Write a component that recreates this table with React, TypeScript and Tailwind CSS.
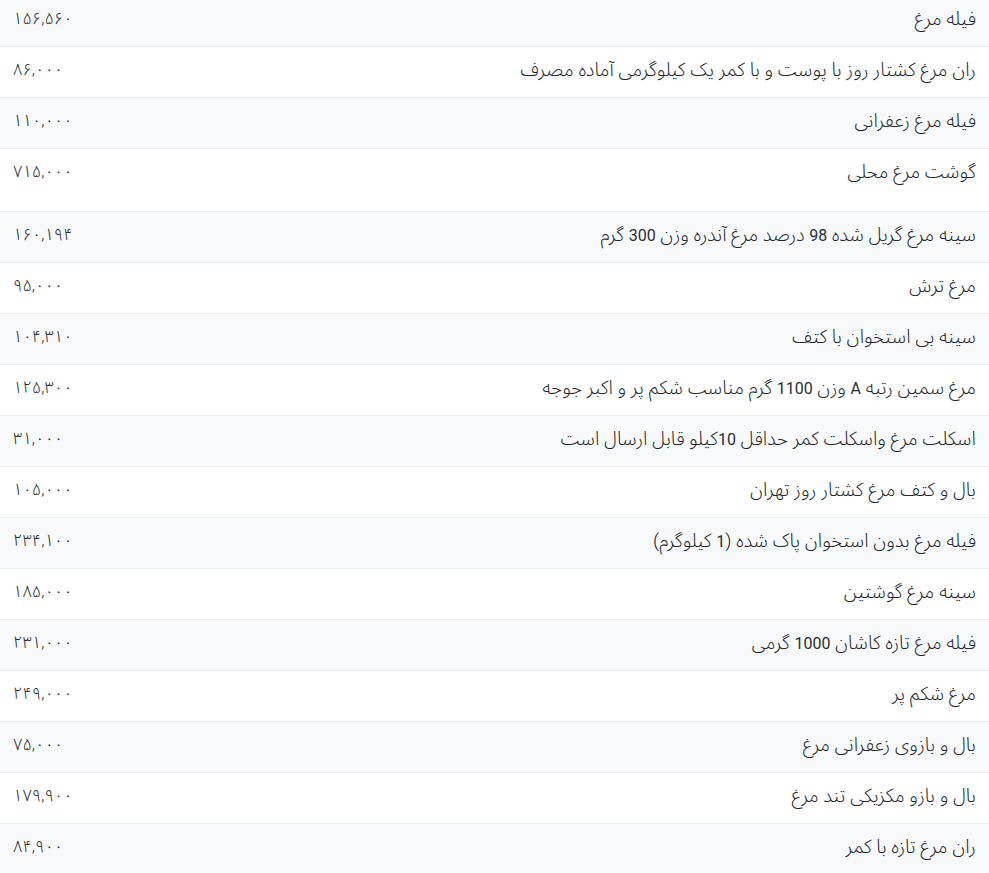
import React from "react";

const rows: { name: string; price: string; tall?: boolean }[] = [
  { name: "فیله مرغ", price: "۱۵۶,۵۶۰" },
  { name: "ران مرغ کشتار روز با پوست و با کمر یک کیلوگرمی آماده مصرف", price: "۸۶,۰۰۰" },
  { name: "فیله مرغ زعفرانی", price: "۱۱۰,۰۰۰" },
  { name: "گوشت مرغ محلی", price: "۷۱۵,۰۰۰", tall: true },
  { name: "سینه مرغ گریل شده 98 درصد مرغ آندره وزن 300 گرم", price: "۱۶۰,۱۹۴" },
  { name: "مرغ ترش", price: "۹۵,۰۰۰" },
  { name: "سینه بی استخوان با کتف", price: "۱۰۴,۳۱۰" },
  { name: "مرغ سمین رتبه A وزن 1100 گرم مناسب شکم پر و اکبر جوجه", price: "۱۲۵,۳۰۰" },
  { name: "اسکلت مرغ واسکلت کمر حداقل 10کیلو قابل ارسال است", price: "۳۱,۰۰۰" },
  { name: "بال و کتف مرغ کشتار روز تهران", price: "۱۰۵,۰۰۰" },
  { name: "فیله مرغ بدون استخوان پاک شده (1 کیلوگرم)", price: "۲۳۴,۱۰۰" },
  { name: "سینه مرغ گوشتین", price: "۱۸۵,۰۰۰" },
  { name: "فیله مرغ تازه کاشان 1000 گرمی", price: "۲۳۱,۰۰۰" },
  { name: "مرغ شکم پر", price: "۲۴۹,۰۰۰" },
  { name: "بال و بازوی زعفرانی مرغ", price: "۷۵,۰۰۰" },
  { name: "بال و بازو مکزیکی تند مرغ", price: "۱۷۹,۹۰۰" },
  { name: "ران مرغ تازه با کمر", price: "۸۴,۹۰۰" },
];

function Name({ text }: { text: string }) {
  const parts = text.split(/([A-Za-z0-9]+)/);
  return (
    <>
      {parts.map((p, i) =>
        /^[A-Za-z0-9]+$/.test(p) ? (
          <span key={i} className="text-[16px] font-normal text-[#2a2e33]">
            {p}
          </span>
        ) : (
          <React.Fragment key={i}>{p}</React.Fragment>
        )
      )}
    </>
  );
}

export default function App() {
  return (
    <div
      dir="rtl"
      className="w-full overflow-hidden bg-white text-[#212529]"
      style={{ fontFamily: "Roboto, 'Noto Sans Arabic', 'DejaVu Sans', sans-serif" }}
    >
      <div className="-mt-[4px] flex flex-col">
        {rows.map((r, i) => (
          <div
            key={i}
            className={`flex items-start justify-between overflow-hidden border-b border-[#eaecef] px-[13px] pt-[11px] leading-6 ${
              r.tall ? "h-[63px]" : "h-[51px]"
            } ${i % 2 === 0 ? "bg-[#f8f9fa]" : "bg-white"}`}
          >
            <div className="text-[19px] font-light">
              <Name text={r.name} />
            </div>
            <div className="w-[100px] text-left text-[16.5px] font-light">{r.price}</div>
          </div>
        ))}
      </div>
    </div>
  );
}
